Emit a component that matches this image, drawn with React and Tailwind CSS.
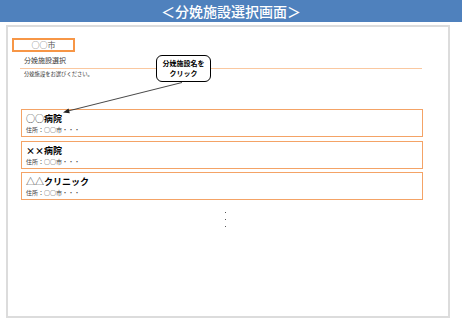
import React from "react";

const jp = { fontFamily: '"Noto Sans CJK JP", "Noto Sans", sans-serif' };

function Card({ title, bold }) {
  return (
    <div className="h-[28px] w-[402px] border-[1.5px] border-[#f4a366] bg-white pl-[4px] pt-[4px]">
      <div className="flex items-baseline text-[9px] leading-[10px] text-black">
        <span className="font-normal text-[#333]">{title}</span>
        <span className="font-bold">{bold}</span>
      </div>
      <div className="mt-[2px] text-[6px] leading-[7px] text-[#404040]">住所：○○市・・・</div>
    </div>
  );
}

export default function App() {
  return (
    <div className="relative h-[320px] w-[462px] overflow-hidden bg-white" style={jp}>
      <div className="flex h-[22px] w-full items-center justify-center bg-[#4f81bd] text-[14px] font-medium leading-[22px] text-white">
        ＜分娩施設選択画面＞
      </div>
      <div className="ml-[6px] mt-[3px] h-[293px] w-[444px] border-2 border-[#dcdcdc] bg-white">
        <div className="ml-[4px] mt-[11px] flex h-[14px] w-[63px] items-center justify-center border-2 border-[#f79646] text-[8px] leading-[8px] text-[#595959]">
          ○○市
        </div>
        <div className="ml-[16px] mt-[4px] text-[7px] leading-[9px] text-[#404040]">分娩施設選択</div>
        <div className="ml-[12px] mt-[3px] h-px w-[402px] bg-[#fac8a0]"></div>
        <div className="ml-[16px] mt-[2px] text-[5.3px] leading-[6px] text-[#333]">分娩施設をお選びください。</div>
        <div className="ml-[13px] mt-[32px] flex flex-col gap-[3.5px]">
          <Card title="○○" bold="病院" />
          <Card title="" bold="××病院" />
          <Card title="△△" bold="クリニック" />
        </div>
        <div className="ml-[217px] mt-[12px] flex flex-col gap-[6px]">
          <div className="h-px w-px bg-[#555]"></div>
          <div className="h-px w-px bg-[#555]"></div>
          <div className="h-px w-px bg-[#555]"></div>
        </div>
      </div>

      <div className="absolute left-[156px] top-[55px] flex h-[27px] w-[55px] flex-col items-center justify-center rounded-[6px] border border-black bg-white text-[7px] font-bold leading-[9.5px] text-black">
        <span>分娩施設名を</span>
        <span>クリック</span>
      </div>

      <svg className="pointer-events-none absolute left-0 top-0" width="462" height="320" viewBox="0 0 462 320">
        <line x1="182" y1="82.5" x2="68" y2="111" stroke="#333" strokeWidth="0.9" />
        <polygon points="63,112.5 68.5,108.5 69.8,113.3" fill="#222" />
      </svg>
    </div>
  );
}
